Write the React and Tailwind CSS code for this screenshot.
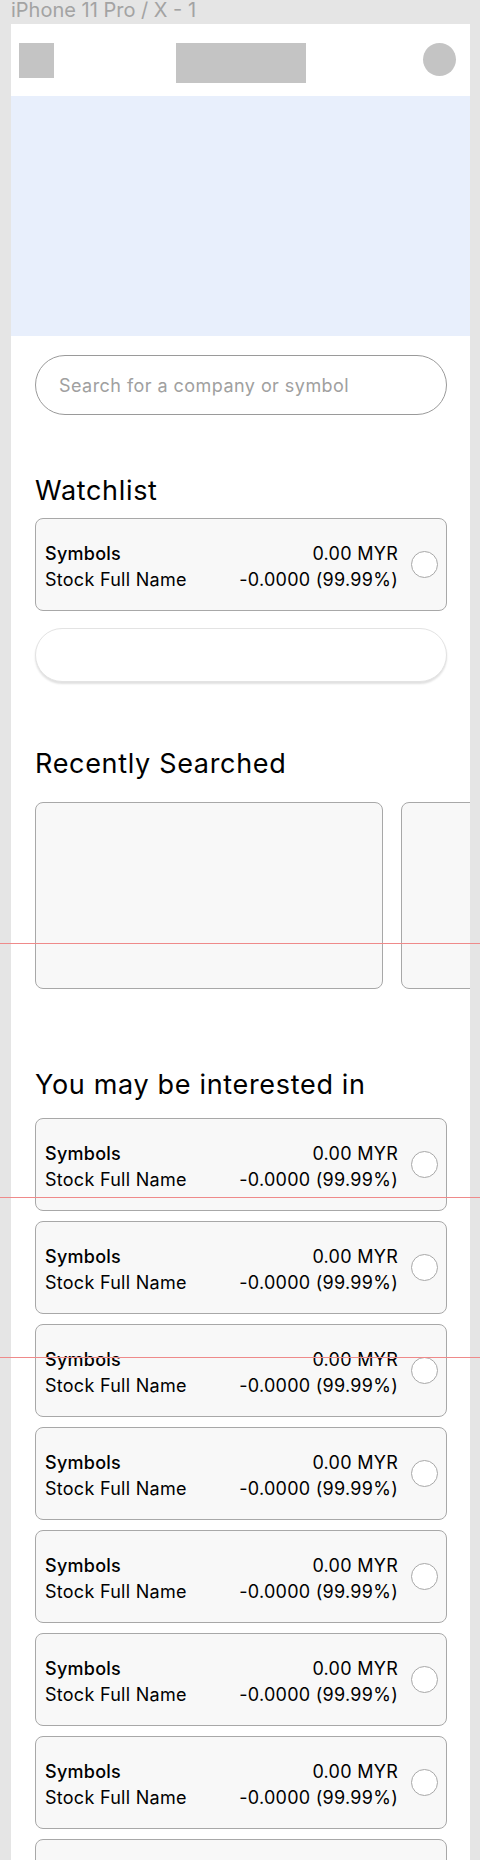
import React from 'react';

const FONT = { fontFamily: 'Inter, "Noto Sans", sans-serif' };

function StockRow() {
  return (
    <div className="flex h-[93px] items-center rounded-[8px] border border-[#a8a8a8] bg-[#f8f8f8] pl-[9px] pr-[8px]">
      <div className="flex flex-1 justify-between pt-[4px] text-[18px] leading-[26px] tracking-[0.015em] text-black">
        <div>
          <p className="font-medium">Symbols</p>
          <p>Stock Full Name</p>
        </div>
        <div className="text-right">
          <p>0.00 MYR</p>
          <p>-0.0000 (99.99%)</p>
        </div>
      </div>
      <span className="ml-[13px] h-[27px] w-[27px] shrink-0 rounded-full border border-[#a8a8a8] bg-white" />
    </div>
  );
}

function SectionTitle({ children, className = '' }) {
  return (
    <h2 className={`text-[27px] leading-[32px] font-normal tracking-[0.025em] text-black ${className}`}>
      {children}
    </h2>
  );
}

export default function App() {
  return (
    <div className="relative h-[1860px] overflow-hidden bg-[#e5e5e5] pl-[11px] pr-[10px]" style={FONT}>
      <p className="h-[24px] text-[20px] leading-[20px] text-[#a3a3a3]">iPhone 11 Pro / X - 1</p>

      <div className="h-[1836px] overflow-hidden bg-white">
        {/* header */}
        <div className="grid h-[72px] grid-cols-[1fr_auto_1fr] items-start pt-[19px]">
          <span className="ml-[8px] h-[35px] w-[35px] bg-[#c4c4c4]" />
          <span className="h-[40px] w-[130px] bg-[#c4c4c4]" />
          <span className="mr-[14px] h-[33px] w-[33px] justify-self-end rounded-full bg-[#c4c4c4]" />
        </div>

        <div className="h-[240px] bg-[#e8effc]" />

        <div className="px-[24px] pr-[23px]">
          <div className="mt-[19px] flex h-[60px] items-center rounded-full border border-[#9a9a9a] px-[23px] text-[18px] tracking-[0.025em] text-[#a0a0a0]">
            Search for a company or symbol
          </div>

          <SectionTitle className="mt-[60px]">Watchlist</SectionTitle>
          <div className="mt-[11px]">
            <StockRow />
          </div>
          <div className="mt-[17px] h-[54px] rounded-full border border-[#e3e3e3] bg-white shadow-[0_2px_2px_rgba(0,0,0,0.12)]" />

          <SectionTitle className="mt-[66px]">Recently Searched</SectionTitle>
        </div>

        <div className="mt-[22px] flex gap-[18px] overflow-hidden pl-[24px]">
          <div className="h-[187px] w-[348px] shrink-0 rounded-[8px] border border-[#a8a8a8] bg-[#f8f8f8]" />
          <div className="h-[187px] w-[348px] shrink-0 rounded-[8px] border border-[#a8a8a8] bg-[#f8f8f8]" />
        </div>

        <div className="px-[24px] pr-[23px]">
          <SectionTitle className="mt-[80px]">You may be interested in</SectionTitle>
          <div className="mt-[17px] flex flex-col gap-[10px]">
            {Array.from({ length: 8 }).map((_, i) => (
              <StockRow key={i} />
            ))}
          </div>
        </div>
      </div>

      {/* figma guides */}
      <span className="pointer-events-none absolute left-0 right-0 top-[943px] h-px bg-[#ef8a8a]" />
      <span className="pointer-events-none absolute left-0 right-0 top-[1197px] h-px bg-[#ef8a8a]" />
      <span className="pointer-events-none absolute left-0 right-0 top-[1357px] h-px bg-[#ef8a8a]" />
    </div>
  );
}
